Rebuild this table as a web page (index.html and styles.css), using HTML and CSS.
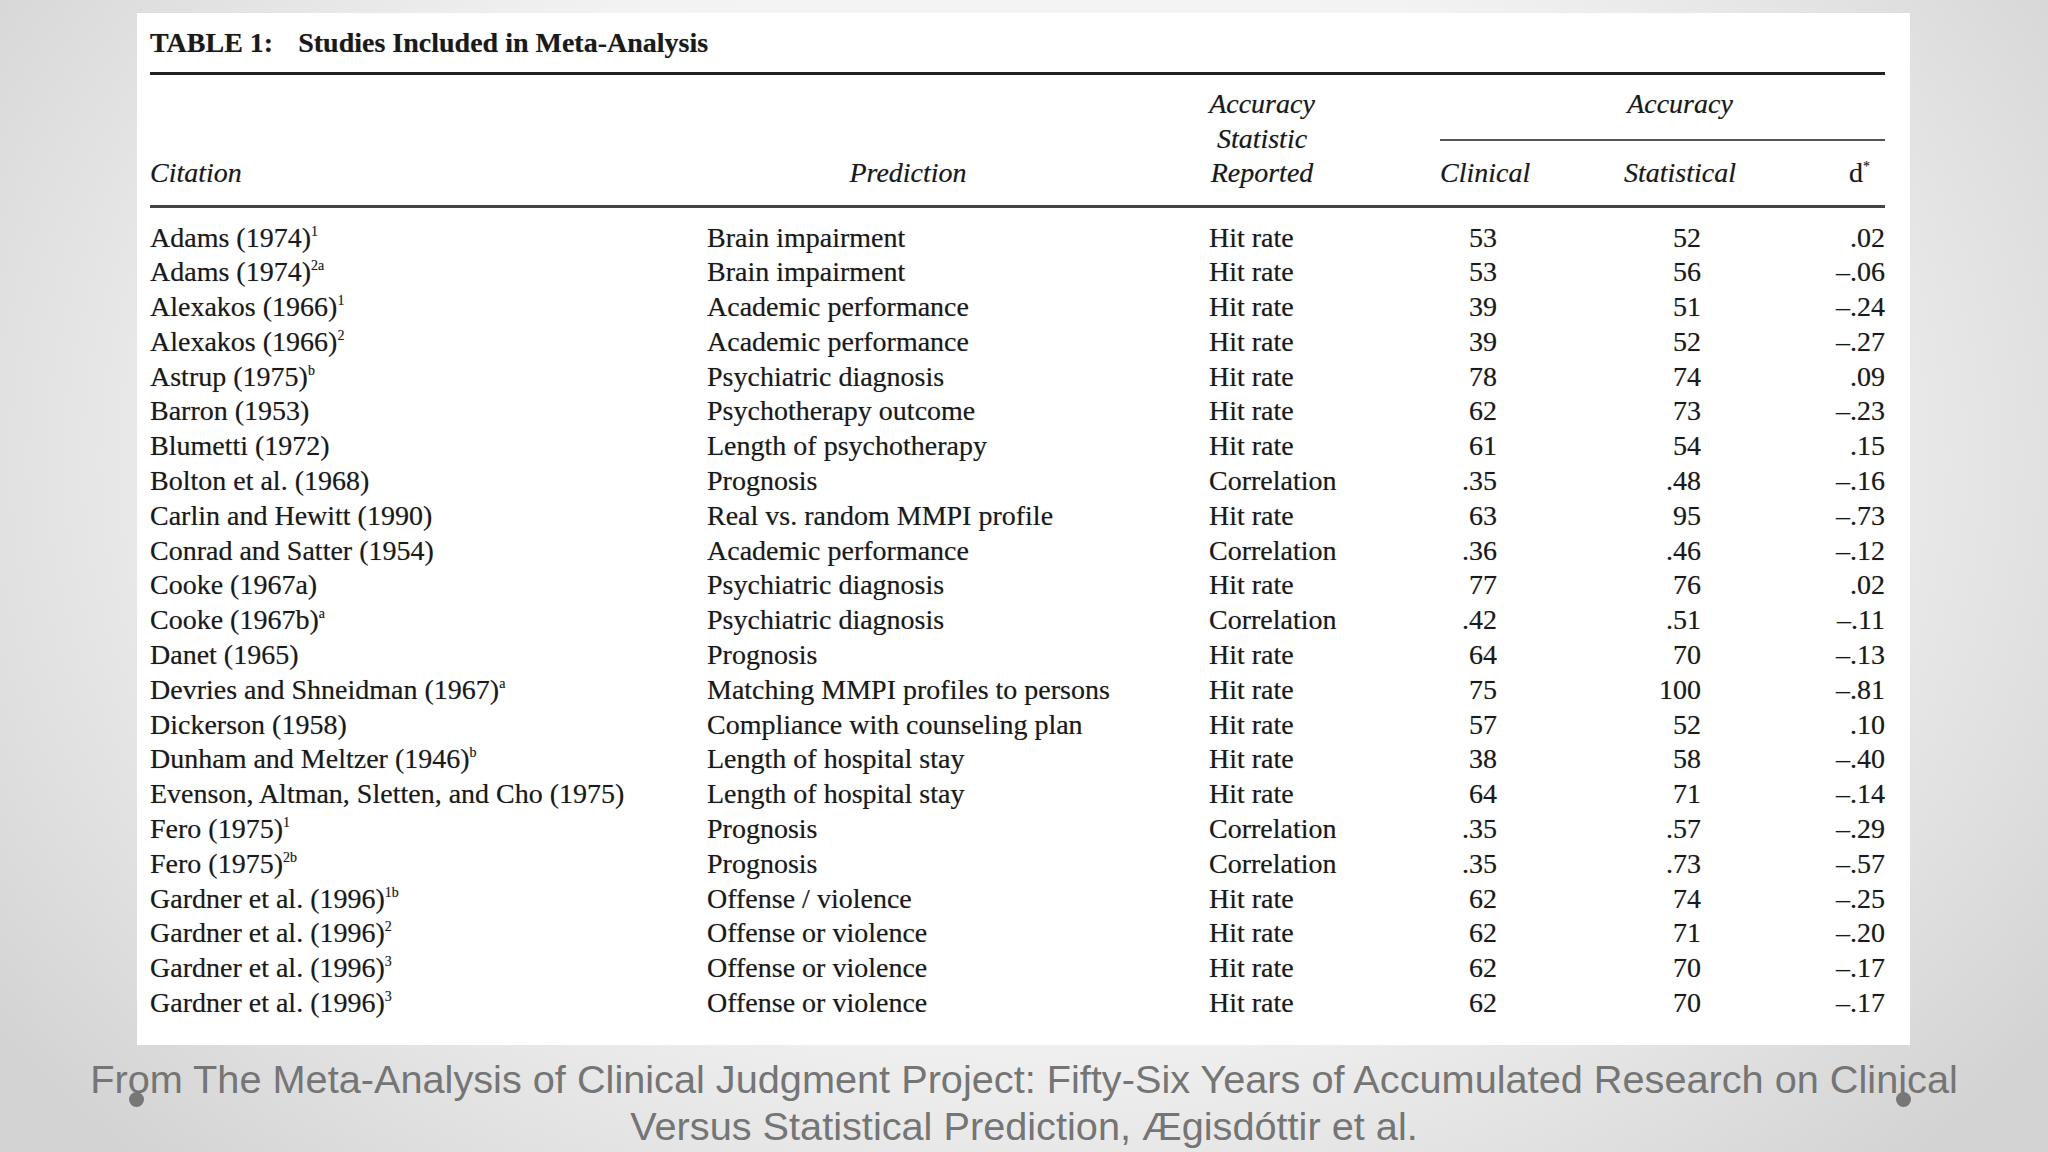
FILE: index.html
```html
<!DOCTYPE html>
<html lang="en">
<head>
<meta charset="utf-8">
<title>Studies Included in Meta-Analysis</title>
<link rel="stylesheet" href="styles.css">
</head>
<body>
<div class="slide">
  <div class="panel">
    <div class="title"><span class="title-label">TABLE 1:</span>Studies Included in Meta-Analysis</div>
    <div class="rule-top"></div>
    <div class="head">
      <div class="h-cit">Citation</div>
      <div class="h-pred">Prediction</div>
      <div class="h-stat">Accuracy<br>Statistic<br>Reported</div>
      <div class="h-acc">Accuracy</div>
      <div class="h-span-rule"></div>
      <div class="h-clin">Clinical</div>
      <div class="h-statl">Statistical</div>
      <div class="h-d">d<sup>*</sup></div>
    </div>
    <div class="rule-mid"></div>
    <div class="rows">
      <div class="row"><span>Adams (1974)<sup>1</sup></span><span>Brain impairment</span><span>Hit rate</span><span class="num c">53</span><span class="num s">52</span><span class="num d">.02</span></div>
      <div class="row"><span>Adams (1974)<sup>2a</sup></span><span>Brain impairment</span><span>Hit rate</span><span class="num c">53</span><span class="num s">56</span><span class="num d">–.06</span></div>
      <div class="row"><span>Alexakos (1966)<sup>1</sup></span><span>Academic performance</span><span>Hit rate</span><span class="num c">39</span><span class="num s">51</span><span class="num d">–.24</span></div>
      <div class="row"><span>Alexakos (1966)<sup>2</sup></span><span>Academic performance</span><span>Hit rate</span><span class="num c">39</span><span class="num s">52</span><span class="num d">–.27</span></div>
      <div class="row"><span>Astrup (1975)<sup>b</sup></span><span>Psychiatric diagnosis</span><span>Hit rate</span><span class="num c">78</span><span class="num s">74</span><span class="num d">.09</span></div>
      <div class="row"><span>Barron (1953)</span><span>Psychotherapy outcome</span><span>Hit rate</span><span class="num c">62</span><span class="num s">73</span><span class="num d">–.23</span></div>
      <div class="row"><span>Blumetti (1972)</span><span>Length of psychotherapy</span><span>Hit rate</span><span class="num c">61</span><span class="num s">54</span><span class="num d">.15</span></div>
      <div class="row"><span>Bolton et al. (1968)</span><span>Prognosis</span><span>Correlation</span><span class="num c">.35</span><span class="num s">.48</span><span class="num d">–.16</span></div>
      <div class="row"><span>Carlin and Hewitt (1990)</span><span>Real vs. random MMPI profile</span><span>Hit rate</span><span class="num c">63</span><span class="num s">95</span><span class="num d">–.73</span></div>
      <div class="row"><span>Conrad and Satter (1954)</span><span>Academic performance</span><span>Correlation</span><span class="num c">.36</span><span class="num s">.46</span><span class="num d">–.12</span></div>
      <div class="row"><span>Cooke (1967a)</span><span>Psychiatric diagnosis</span><span>Hit rate</span><span class="num c">77</span><span class="num s">76</span><span class="num d">.02</span></div>
      <div class="row"><span>Cooke (1967b)<sup>a</sup></span><span>Psychiatric diagnosis</span><span>Correlation</span><span class="num c">.42</span><span class="num s">.51</span><span class="num d">–.11</span></div>
      <div class="row"><span>Danet (1965)</span><span>Prognosis</span><span>Hit rate</span><span class="num c">64</span><span class="num s">70</span><span class="num d">–.13</span></div>
      <div class="row"><span>Devries and Shneidman (1967)<sup>a</sup></span><span>Matching MMPI profiles to persons</span><span>Hit rate</span><span class="num c">75</span><span class="num s">100</span><span class="num d">–.81</span></div>
      <div class="row"><span>Dickerson (1958)</span><span>Compliance with counseling plan</span><span>Hit rate</span><span class="num c">57</span><span class="num s">52</span><span class="num d">.10</span></div>
      <div class="row"><span>Dunham and Meltzer (1946)<sup>b</sup></span><span>Length of hospital stay</span><span>Hit rate</span><span class="num c">38</span><span class="num s">58</span><span class="num d">–.40</span></div>
      <div class="row"><span>Evenson, Altman, Sletten, and Cho (1975)</span><span>Length of hospital stay</span><span>Hit rate</span><span class="num c">64</span><span class="num s">71</span><span class="num d">–.14</span></div>
      <div class="row"><span>Fero (1975)<sup>1</sup></span><span>Prognosis</span><span>Correlation</span><span class="num c">.35</span><span class="num s">.57</span><span class="num d">–.29</span></div>
      <div class="row"><span>Fero (1975)<sup>2b</sup></span><span>Prognosis</span><span>Correlation</span><span class="num c">.35</span><span class="num s">.73</span><span class="num d">–.57</span></div>
      <div class="row"><span>Gardner et al. (1996)<sup>1b</sup></span><span>Offense / violence</span><span>Hit rate</span><span class="num c">62</span><span class="num s">74</span><span class="num d">–.25</span></div>
      <div class="row"><span>Gardner et al. (1996)<sup>2</sup></span><span>Offense or violence</span><span>Hit rate</span><span class="num c">62</span><span class="num s">71</span><span class="num d">–.20</span></div>
      <div class="row"><span>Gardner et al. (1996)<sup>3</sup></span><span>Offense or violence</span><span>Hit rate</span><span class="num c">62</span><span class="num s">70</span><span class="num d">–.17</span></div>
      <div class="row"><span>Gardner et al. (1996)<sup>3</sup></span><span>Offense or violence</span><span>Hit rate</span><span class="num c">62</span><span class="num s">70</span><span class="num d">–.17</span></div>
    </div>
  </div>
  <p class="caption">From The Meta-Analysis of Clinical Judgment Project: Fifty-Six Years of Accumulated Research on Clinical<br>Versus Statistical Prediction, Ægisdóttir et al.</p>
  <span class="dot dot-left"></span>
  <span class="dot dot-right"></span>
</div>
</body>
</html>
```

FILE: styles.css
```css
html, body {
  margin: 0;
  padding: 0;
}

body {
  width: 2048px;
  height: 1152px;
  overflow: hidden;
}

.slide {
  position: relative;
  width: 2048px;
  height: 1152px;
  display: flex;
  flex-direction: column;
  background: radial-gradient(ellipse 62% 85% at 50% 40%, #fcfcfc 0%, #f3f3f3 55%, #e0e0e0 82%, #d3d3d3 100%);
}

.panel {
  box-sizing: border-box;
  margin: 13px 0 0 137px;
  width: 1773px;
  height: 1032px;
  padding: 13px 25px 0 13px;
  background: #ffffff;
  color: #1a1a1a;
  font-family: "Liberation Serif", "Times New Roman", serif;
  font-size: 28px;
  text-shadow: 0 0 1px rgba(0, 0, 0, 0.35);
}

.title {
  font-weight: bold;
  line-height: 34px;
  height: 34px;
  white-space: nowrap;
}

.title-label {
  margin-right: 25px;
}

.rule-top {
  margin-top: 12px;
  border-top: 3px solid #222;
}

.head {
  margin-top: 12px;
  display: grid;
  grid-template-columns: 557px 502px 231px 72px 289px 84px;
  grid-template-rows: 34.5px 34.5px 34.5px;
  font-style: italic;
  line-height: 34.5px;
  white-space: nowrap;
}

.h-cit {
  grid-column: 1;
  grid-row: 3;
}

.h-pred {
  grid-column: 2;
  grid-row: 3;
  text-align: center;
  padding-right: 100px;
}

.h-stat {
  grid-column: 3;
  grid-row: 1 / span 3;
  text-align: center;
  padding-right: 125px;
}

.h-acc {
  grid-column: 5;
  grid-row: 1;
  text-align: center;
  padding-left: 47px;
}

.h-span-rule {
  grid-column: 4 / span 3;
  grid-row: 2;
  align-self: start;
  margin-top: 17px;
  border-top: 2px solid #555;
}

.h-clin {
  grid-column: 4;
  grid-row: 3;
  text-align: center;
}

.h-statl {
  grid-column: 5;
  grid-row: 3;
  text-align: center;
  padding-left: 47px;
}

.h-d {
  grid-column: 6;
  grid-row: 3;
  text-align: right;
  font-style: normal;
  padding-right: 15px;
}

.rule-mid {
  margin-top: 14px;
  border-top: 3px solid #444;
}

.rows {
  margin-top: 13px;
}

.row {
  display: grid;
  grid-template-columns: 557px 502px 231px 72px 289px 84px;
  height: 34.8px;
  line-height: 34.8px;
  white-space: nowrap;
}

.num {
  text-align: right;
}

.num.c {
  padding-right: 15px;
}

.num.s {
  padding-right: 100px;
}

.num.d {
  padding-right: 0;
}

sup {
  font-size: 0.5em;
  line-height: 0;
  vertical-align: 0.8em;
}

.caption {
  margin: 11px 0 0 0;
  text-align: center;
  font-family: "Liberation Sans", Arial, sans-serif;
  font-size: 39.7px;
  line-height: 47px;
  color: #757575;
  white-space: nowrap;
}

.dot {
  position: absolute;
  top: 1092px;
  width: 15px;
  height: 15px;
  border-radius: 50%;
  background: #777;
}

.dot-left {
  left: 129px;
}

.dot-right {
  left: 1896px;
}
```
